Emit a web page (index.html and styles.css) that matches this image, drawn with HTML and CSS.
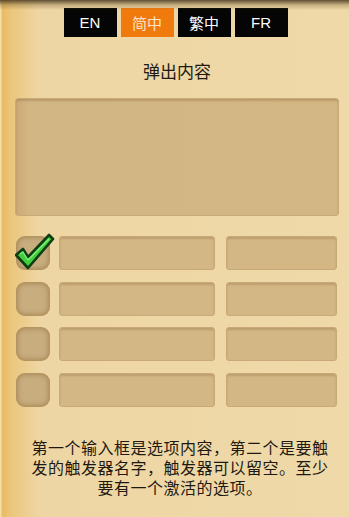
FILE: index.html
```html
<!DOCTYPE html>
<html lang="zh">
<head>
    <meta charset="UTF-8">
    <meta name="viewport" content="width=device-width, initial-scale=1.0">
    <title>弹出内容</title>
    <link rel="stylesheet" href="styles.css">
</head>
<body>

<div class="panel">
    <div class="lang-bar">
        <button class="lang">EN</button>
        <button class="lang active">简中</button>
        <button class="lang">繁中</button>
        <button class="lang">FR</button>
    </div>

    <h2 class="title">弹出内容</h2>
    <textarea class="content-box"></textarea>

    <div class="options">
        <div class="option">
            <div class="check checked">
                <svg class="tick" viewBox="0 0 40 40" width="40" height="40">
                    <path d="M1 22 L8 16 L13 24 L34 2 L38 6 L13 35 Z" fill="#3fcf3a" stroke="#0f3d12" stroke-width="2.6" stroke-linejoin="round"/>
                    <path d="M5 21 L8 19 L13 27 L34 6" fill="none" stroke="#9bf08f" stroke-width="1.4" stroke-linejoin="round" opacity="0.8"/>
                </svg>
            </div>
            <input class="field field-main" type="text">
            <input class="field field-trigger" type="text">
        </div>
        <div class="option">
            <div class="check"></div>
            <input class="field field-main" type="text">
            <input class="field field-trigger" type="text">
        </div>
        <div class="option">
            <div class="check"></div>
            <input class="field field-main" type="text">
            <input class="field field-trigger" type="text">
        </div>
        <div class="option">
            <div class="check"></div>
            <input class="field field-main" type="text">
            <input class="field field-trigger" type="text">
        </div>
    </div>

    <p class="hint">第一个输入框是选项内容，第二个是要触发的触发器名字，触发器可以留空。至少要有一个激活的选项。</p>
</div>

</body>
</html>
```

FILE: styles.css
```css
html, body {
    margin: 0;
    padding: 0;
    height: 100%;
}
body {
    font-family: "Noto Sans CJK SC", "Liberation Sans", sans-serif;
    background: linear-gradient(to right, #f3d9a0 0px, #f7e2b0 1px, #e9bb62 2px, #ebc77e 12px, #eed6a4 40px, #efd9a8 100%);
    color: #1e1a12;
}
.panel {
    position: relative;
    height: 100%;
    padding: 8px 10px 0 15px;
    box-sizing: border-box;
}
.panel::before {
    content: "";
    position: absolute;
    left: 0;
    right: 0;
    top: 0;
    height: 10px;
    background: linear-gradient(to bottom, rgba(70, 55, 30, 0.85), rgba(120, 95, 55, 0.35) 50%, rgba(239, 217, 168, 0));
}
.lang-bar {
    display: flex;
    justify-content: center;
    gap: 4px;
    margin-left: -3px;
}
.lang {
    width: 53px;
    height: 29px;
    border: none;
    padding: 0;
    background: #050505;
    color: #fff;
    font-family: "Liberation Sans", "Noto Sans CJK SC", sans-serif;
    font-size: 15px;
}
.lang.active {
    background: #f07b0c;
    color: #fde3c8;
}
.title {
    margin: 22px 0 0;
    height: 24px;
    line-height: 24px;
    font-size: 17px;
    font-weight: normal;
    text-align: center;
}
.content-box {
    display: block;
    width: 324px;
    height: 118px;
    margin: 15px 0 0;
    box-sizing: border-box;
    border: 1px solid #c9a977;
    border-radius: 3px;
    background: linear-gradient(to right, #cca876 0px, #d2b683 12px, #d3b785 100%);
    box-shadow: inset 0 2px 2px rgba(140, 105, 55, 0.35);
    resize: none;
}
.options {
    display: flex;
    flex-direction: column;
    gap: 11.5px;
    margin-top: 20px;
}
.option {
    display: flex;
    align-items: center;
    height: 34px;
}
.check {
    position: relative;
    width: 34px;
    height: 34px;
    margin-left: 1px;
    box-sizing: border-box;
    border-radius: 9px;
    background: #c8ad7f;
    box-shadow: inset 0 0 4px 2px rgba(150, 115, 60, 0.55);
}
.tick {
    position: absolute;
    left: -1px;
    top: -3px;
}
.field {
    height: 34px;
    box-sizing: border-box;
    border: 1px solid #caa979;
    border-radius: 3px;
    background: #d3b785;
    box-shadow: inset 0 2px 2px rgba(140, 105, 55, 0.3);
    padding: 0 6px;
}
.field-main {
    width: 156px;
    margin-left: 9px;
}
.field-trigger {
    width: 111px;
    margin-left: 11px;
}
.hint {
    width: 310px;
    margin: 30px 0 0 10px;
    font-size: 16px;
    line-height: 20px;
    text-align: center;
    text-spacing-trim: space-all;
    letter-spacing: 0.5px;
}
```
